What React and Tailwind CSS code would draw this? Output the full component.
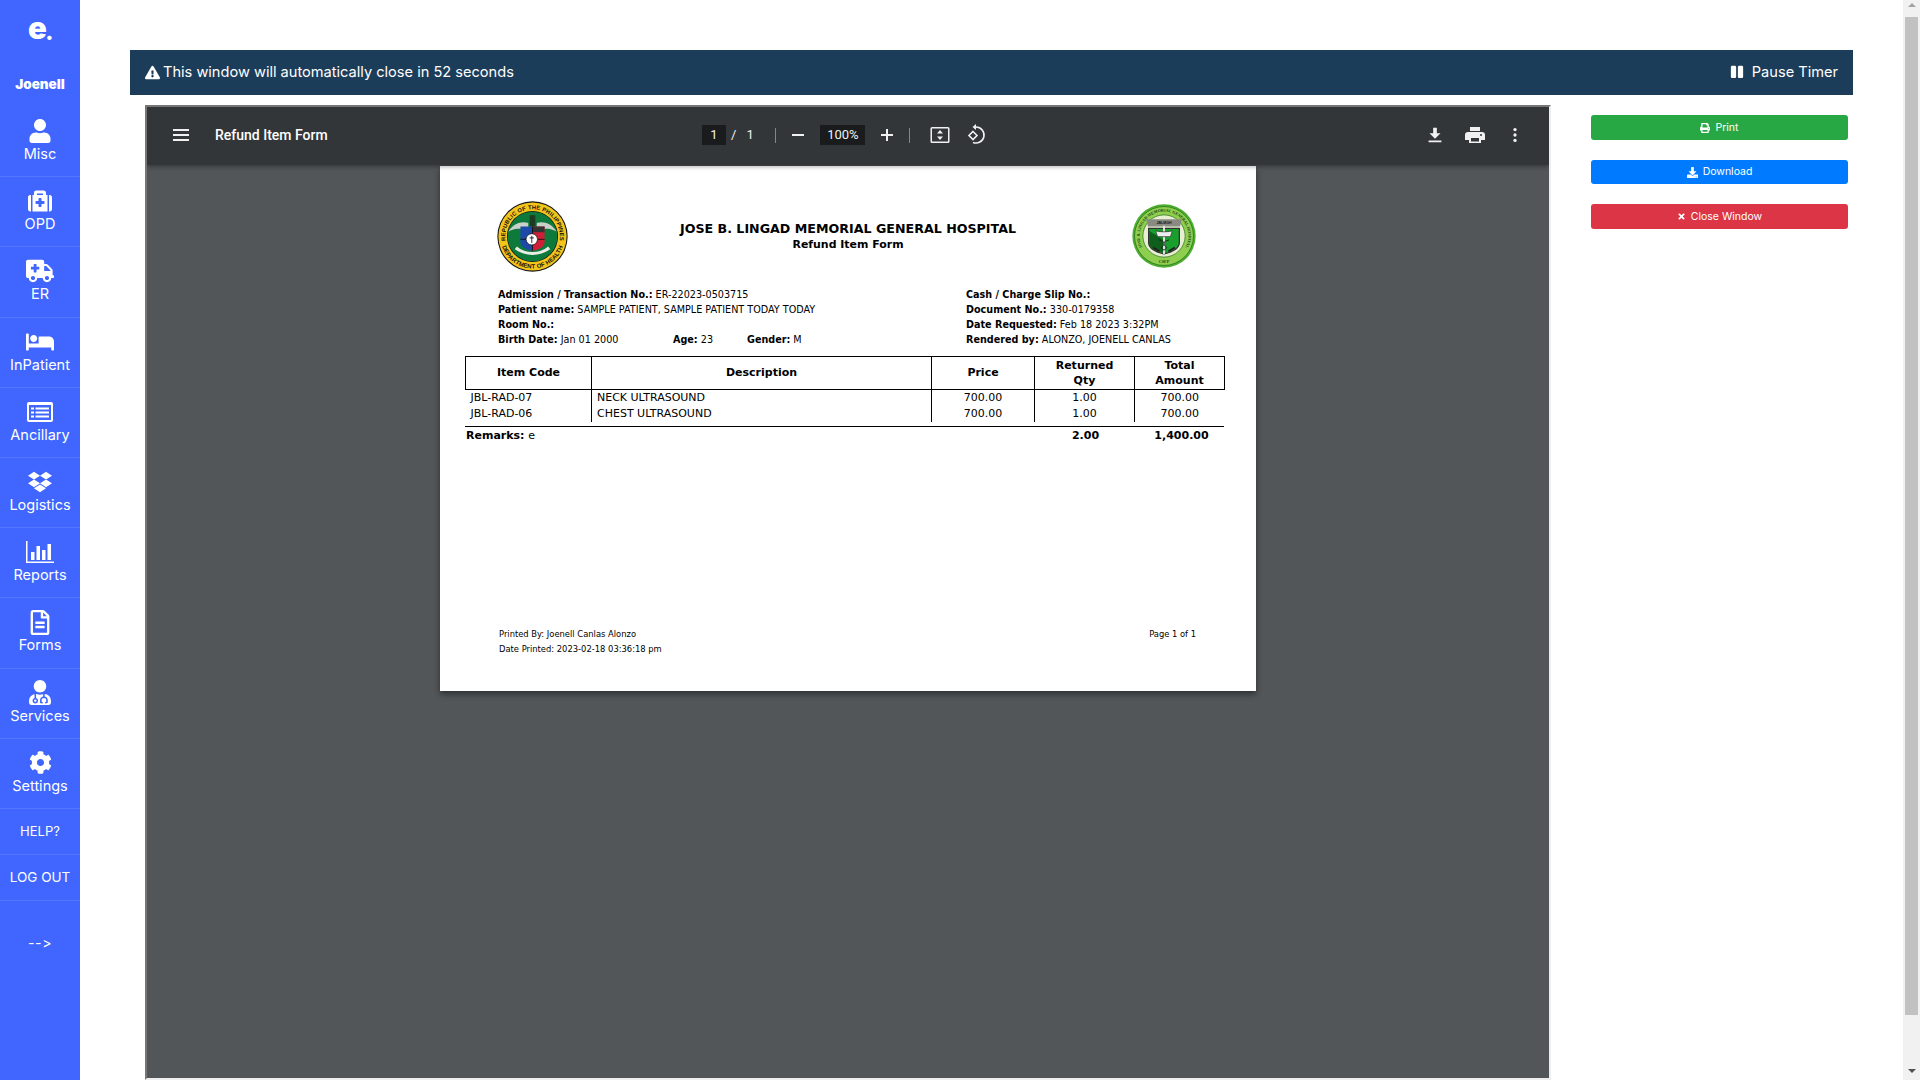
import {
  FaUser, FaMedkit, FaAmbulance, FaBed, FaDropbox, FaRegFileAlt, FaUserMd, FaCog,
  FaExclamationTriangle, FaPause, FaPrint, FaDownload, FaTimes,
} from 'react-icons/fa';

function ChartIcon({ className }) {
  return (
    <svg viewBox="0 0 28 22" className={className} fill="currentColor">
      <path d="M0 0h1.500v20.500H28V22H0z" />
      <path d="M5 11h3.500v8H5zM10.500 5h3.500v14h-3.500zM16 9h3.500v10H16zM21.500 3H25v16h-3.500z" />
    </svg>
  );
}

function ListIcon({ className }) {
  return (
    <svg viewBox="0 0 26 20" className={className}>
      <rect width="26" height="20" rx="2" fill="currentColor" />
      <rect x="2" y="3" width="22" height="15" fill="#4066ff" />
      <path d="M4 5.500h3v2H4zM4 9.500h3v2H4zM4 13.500h3v2H4zM8.500 5.500H22v2H8.500zM8.500 9.500H22v2H8.500zM8.500 13.500H22v2H8.500z" fill="currentColor" />
    </svg>
  );
}

const navItems = [
  { label: 'Misc', icon: <FaUser className="w-[22px] h-[24px]" /> },
  { label: 'OPD', icon: <FaMedkit className="w-[26px] h-[24px]" /> },
  { label: 'ER', icon: <FaAmbulance className="w-[28px] h-[24px]" /> },
  { label: 'InPatient', icon: <FaBed className="w-[28px] h-[24px]" /> },
  { label: 'Ancillary', icon: <ListIcon className="w-[26px] h-[20px]" /> },
  { label: 'Logistics', icon: <FaDropbox className="w-[24px] h-[24px]" /> },
  { label: 'Reports', icon: <ChartIcon className="w-[28px] h-[22px]" /> },
  { label: 'Forms', icon: <FaRegFileAlt className="w-[22px] h-[25px]" /> },
  { label: 'Services', icon: <FaUserMd className="w-[22px] h-[25px]" /> },
  { label: 'Settings', icon: <FaCog className="w-[23px] h-[23px]" /> },
];

function Sidebar() {
  return (
    <aside className="w-20 shrink-0 h-full bg-[#4066ff] text-white flex flex-col font-['Inter',sans-serif]">
      <div className="h-[107px] shrink-0 flex flex-col items-center">
        <div className="mt-[7px] h-[40px] flex items-center text-[31px] font-black leading-none tracking-tighter">e<span className="text-[22px] mt-[9px]">.</span></div>
        <div className="mt-[31px] text-[13.500px] font-black leading-none">Joenell</div>
      </div>
      {navItems.map((item) => (
        <div key={item.label} className="h-[70.2px] shrink-0 border-b border-white/10 flex flex-col items-center pt-[11px]">
          <div className="h-[26px] flex items-center justify-center">{item.icon}</div>
          <div className="mt-[1px] text-[14.500px] leading-[18px]">{item.label}</div>
        </div>
      ))}
      <div className="h-[46px] shrink-0 border-b border-white/10 flex items-center justify-center text-[13px]">HELP?</div>
      <div className="h-[46px] shrink-0 border-b border-white/10 flex items-center justify-center text-[13.500px]">LOG OUT</div>
      <div className="mt-[32px] text-center text-[14px] leading-[20px] tracking-wider">--&gt;</div>
    </aside>
  );
}

function ToolIcon({ children, className, size = 24 }) {
  return (
    <svg viewBox="0 0 24 24" width={size} height={size} fill="currentColor" className={className}>
      {children}
    </svg>
  );
}

function Separator() {
  return <div className="w-px h-[15px] bg-white/40" />;
}

function PdfToolbar() {
  return (
    <div className="h-[58px] pb-[2px] shrink-0 bg-[#323639] text-[#f1f1f1] flex items-center shadow-[0_2px_4px_rgba(0,0,0,0.3)] relative z-10 font-['Roboto',sans-serif]">
      <ToolIcon size={24} className="ml-[22px]"><path d="M4 6h16v2H4zM4 11h16v2H4zM4 16h16v2H4z" /></ToolIcon>
      <div className="ml-[22px] w-[487px] text-[14px] font-medium text-white">Refund Item Form</div>
      <div className="w-[24px] h-[20px] bg-[#191b1c] flex items-center justify-center text-[13px]">1</div>
      <div className="ml-[5px] text-[13px]">/</div>
      <div className="ml-[10px] w-[8px] text-[13px]">1</div>
      <div className="ml-[21px]"><Separator /></div>
      <ToolIcon size={24} className="ml-[10px]"><path d="M6 11h12v2H6z" /></ToolIcon>
      <div className="ml-[10px] w-[45px] h-[20px] bg-[#191b1c] flex items-center justify-center text-[13px]">100%</div>
      <ToolIcon size={24} className="ml-[10px]"><path d="M11 6h2v5h5v2h-5v5h-2v-5H6v-2h5z" /></ToolIcon>
      <div className="ml-[10px]"><Separator /></div>
      <ToolIcon size={24} className="ml-[18px]">
        <path d="M4 4h16a1.500 1.500 0 0 1 1.500 1.500v13A1.500 1.500 0 0 1 20 20H4a1.500 1.500 0 0 1-1.500-1.500v-13A1.500 1.500 0 0 1 4 4zm0 1.500v13h16v-13z" />
        <path d="M12 7l3 3.500H9zM12 17l-3-3.500h6z" />
      </ToolIcon>
      <ToolIcon size={24} className="ml-[12px]">
        <path d="M9 8.500 13 12.500 9 16.500 5 12.500z" fill="none" stroke="currentColor" strokeWidth="1.600" />
        <path d="M11 4h1a8 8 0 1 1-3 15.400" fill="none" stroke="currentColor" strokeWidth="1.600" />
        <path d="M12 1v6l-3.500-3z" />
      </ToolIcon>
      <div className="ml-auto flex items-center mr-[24px]">
        <ToolIcon size={22}><path d="M10 4h4v6h4l-6 6-6-6h4zM5 18h14v2H5z" /></ToolIcon>
        <ToolIcon size={24} className="ml-[17px]"><path d="M7 4h10v4H7zM5 9h14a3 3 0 0 1 3 3v5h-4v3H6v-3H2v-5a3 3 0 0 1 3-3zm3 6v3.500h8V15zm10-4a1 1 0 1 0 0 2 1 1 0 0 0 0-2z" fillRule="evenodd" /></ToolIcon>
        <ToolIcon size={20} className="ml-[18px]"><circle cx="12" cy="5.500" r="2" /><circle cx="12" cy="12" r="2" /><circle cx="12" cy="18.500" r="2" /></ToolIcon>
      </div>
    </div>
  );
}

function DohSeal() {
  return (
    <svg viewBox="0 0 100 100" className="w-[71px] h-[71px]">
      <defs>
        <path id="dohTop" d="M13.800 63.200A38.500 38.500 0 1 1 86.200 63.200" />
        <path id="dohBottom" d="M7.700 34.600A45 45 0 1 0 92.300 34.600" />
      </defs>
      <circle cx="50" cy="50" r="49.500" fill="#161616" />
      <circle cx="50" cy="50" r="48" fill="#f3c51b" />
      <circle cx="50" cy="50" r="36" fill="#161616" />
      <circle cx="50" cy="50" r="35" fill="#0d7a3c" />
      <text fontSize="8" fontWeight="700" fill="#111" fontFamily="'Liberation Sans',sans-serif" letterSpacing="0.300">
        <textPath href="#dohTop" startOffset="50%" textAnchor="middle">REPUBLIC OF THE PHILIPPINES</textPath>
      </text>
      <text fontSize="8.500" fontWeight="700" fill="#111" fontFamily="'Liberation Sans',sans-serif" letterSpacing="0.200">
        <textPath href="#dohBottom" startOffset="50%" textAnchor="middle">DEPARTMENT OF HEALTH</textPath>
      </text>
      <path d="M16 43c7-11 18-15 28-12v8H29c-5 0-9 2-13 4z" fill="#c9cfc9" />
      <path d="M84 43c-7-11-18-15-28-12v8h15c5 0 9 2 13 4z" fill="#c9cfc9" />
      <path d="M46 20h8v16h-8z" fill="#1d3a22" />
      <path d="M33 36h17v34c-8-1-17-5-17-12z" fill="#1d4aa8" />
      <path d="M50 36h17v22c0 7-9 11-17 12z" fill="#cf1f36" />
      <path d="M50 36h17v8H50z" fill="#333" />
      <path d="M33 54h34M50 36v34" stroke="#111" strokeWidth="1.200" />
      <circle cx="49" cy="54" r="8" fill="#fff" stroke="#111" />
      <path d="M49 49v10M46 52h6" stroke="#111" strokeWidth="1.200" />
      <path d="M25 68c8 5 16 8 25 8s17-3 25-8l-3-4c-6 5-14 8-22 8s-16-3-22-8z" fill="#e9ece4" />
    </svg>
  );
}

function HospitalSeal() {
  return (
    <svg viewBox="0 0 100 100" className="w-[64px] h-[64px]">
      <defs>
        <path id="hospTop" d="M20.900 74.400A38 38 0 1 1 79.100 74.400" />
      </defs>
      <circle cx="50" cy="50" r="49.500" fill="#4caf2f" />
      <circle cx="50" cy="50" r="46" fill="#8fcf4f" stroke="#1e5e16" />
      <circle cx="50" cy="50" r="33" fill="#e6f0d0" stroke="#1e5e16" />
      <text fontSize="6.400" fontWeight="700" fill="#183f10" fontFamily="'Liberation Serif',serif">
        <textPath href="#hospTop" startOffset="50%" textAnchor="middle">JOSE B. LINGAD MEMORIAL GENERAL HOSPITAL</textPath>
      </text>
      <path d="M22 24h56l-3 11H25z" fill="#8a8a84" />
      <text x="50" y="32" fontSize="5.500" fontWeight="700" textAnchor="middle" fill="#111" fontFamily="'Liberation Sans',sans-serif">JBLMGH</text>
      <path d="M26 38h48v22c0 10-12 15-24 18-12-3-24-8-24-18z" fill="#18a02c" stroke="#333" strokeWidth="2" />
      <path d="M27 42l22 14v20c-10-3-22-7-22-15z" fill="#0e5e1c" />
      <path d="M50 34v44" stroke="#e6e6e6" strokeWidth="3" />
      <path d="M37 42c8 2 18 2 26 0l-3 9H40z" fill="#eee" stroke="#222" />
      <path d="M42 56c10 3 10 6 8 8s-8 4 0 8M58 56c-10 3-10 6-8 8s8 4 0 8" fill="none" stroke="#222" strokeWidth="1.500" />
      <path d="M33 68l10 6M67 68l-10 6" stroke="#222" strokeWidth="3" />
      <text x="50" y="92" fontSize="6.500" fontWeight="700" textAnchor="middle" fill="#183f10" fontFamily="'Liberation Serif',serif">CSFP</text>
    </svg>
  );
}

function Info({ label, value }) {
  return <div className="h-[15px] whitespace-nowrap"><b>{label}</b> {value}</div>;
}

function PdfPage() {
  return (
    <div className="mt-[1px] ml-[293px] w-[816px] h-[525px] shrink-0 bg-white text-black shadow-[0_3px_6px_rgba(0,0,0,0.45)] text-[9.650px] leading-[15px] font-['DejaVu_Sans',sans-serif] relative">
      <div className="pt-[35px] grid grid-cols-[128px_1fr_128px]">
        <div className="pl-[57px]"><DohSeal /></div>
        <div className="text-center font-bold pt-[19px]">
          <div className="text-[12.650px] leading-[17px]">JOSE B. LINGAD MEMORIAL GENERAL HOSPITAL</div>
          <div className="text-[10.950px] leading-[15px]">Refund Item Form</div>
        </div>
        <div className="flex justify-end pr-[60px] pt-[3px]"><HospitalSeal /></div>
      </div>

      <div className="mt-[15px] pl-[58px] flex">
        <div className="w-[468px]">
          <Info label="Admission / Transaction No.:" value="ER-22023-0503715" />
          <Info label="Patient name:" value="SAMPLE PATIENT, SAMPLE PATIENT TODAY TODAY" />
          <Info label="Room No.:" value="" />
          <div className="h-[15px] flex">
            <div className="w-[175px]"><b>Birth Date:</b> Jan 01 2000</div>
            <div className="w-[74px]"><b>Age:</b> 23</div>
            <div><b>Gender:</b> M</div>
          </div>
        </div>
        <div>
          <Info label="Cash / Charge Slip No.:" value="" />
          <Info label="Document No.:" value="330-0179358" />
          <Info label="Date Requested:" value="Feb 18 2023 3:32PM" />
          <Info label="Rendered by:" value="ALONZO, JOENELL CANLAS" />
        </div>
      </div>

      <table className="mt-[9px] ml-[25px] w-[759px] table-fixed border-collapse text-[11px] leading-[15.500px]">
        <colgroup>
          <col className="w-[126px]" />
          <col className="w-[340px]" />
          <col className="w-[103px]" />
          <col className="w-[100px]" />
          <col className="w-[90px]" />
        </colgroup>
        <thead>
          <tr className="h-[33px] font-bold">
            <th className="border border-black font-bold">Item Code</th>
            <th className="border border-black font-bold">Description</th>
            <th className="border border-black font-bold">Price</th>
            <th className="border border-black font-bold">Returned<br />Qty</th>
            <th className="border border-black font-bold">Total<br />Amount</th>
          </tr>
        </thead>
        <tbody>
          {[['JBL-RAD-07', 'NECK ULTRASOUND'], ['JBL-RAD-06', 'CHEST ULTRASOUND']].map(([code, desc]) => (
            <tr key={code} className="h-[16px] align-bottom">
              <td className="border-r border-black pl-[5px]">{code}</td>
              <td className="border-r border-black pl-[5px]">{desc}</td>
              <td className="border-r border-black text-center">700.00</td>
              <td className="border-r border-black text-center">1.00</td>
              <td className="text-center">700.00</td>
            </tr>
          ))}
        </tbody>
      </table>

      <div className="mt-[4px] ml-[25px] w-[759px] border-t border-black pt-[1px] flex text-[11px] leading-[15px] font-bold">
        <div className="w-[569px] pl-[1px]">Remarks: <span className="font-normal">e</span></div>
        <div className="w-[100px] text-center pl-[3px]">2.00</div>
        <div className="w-[90px] text-center pl-[5px]">1,400.00</div>
      </div>

      <div className="mt-[183px] pl-[59px] pr-[60px] flex justify-between text-[9.300px] leading-[15px] font-['DejaVu_Sans_Condensed','DejaVu_Sans',sans-serif] [font-stretch:condensed]">
        <div>
          <div>Printed By: Joenell Canlas Alonzo</div>
          <div>Date Printed: 2023-02-18 03:36:18 pm</div>
        </div>
        <div>Page 1 of 1</div>
      </div>
    </div>
  );
}

function PdfViewer() {
  return (
    <div className="w-[1406px] h-[975px] shrink-0 border-2 border-t-[#767676] border-l-[#767676] border-r-[#eeeeee] border-b-[#eeeeee] bg-[#525659] flex flex-col overflow-hidden">
      <PdfToolbar />
      <PdfPage />
    </div>
  );
}

function ActionButton({ className, icon, label }) {
  return (
    <button className={`w-[257px] rounded-[3px] text-white text-[10.500px] flex items-center justify-center gap-[5px] ${className}`}>
      {icon}
      {label}
    </button>
  );
}

function Scrollbar() {
  return (
    <div className="w-[17px] shrink-0 h-full bg-[#f1f1f1] flex flex-col items-center relative">
      <div className="mt-[3px] w-0 h-0 border-x-[4px] border-x-transparent border-b-[4px] border-b-[#a3a3a3]" />
      <div className="mt-[10px] w-[13px] h-[998px] bg-[#c1c1c1]" />
      <div className="mt-[54px] w-0 h-0 border-x-[4px] border-x-transparent border-t-[4px] border-t-[#505050]" />
    </div>
  );
}

export default function App() {
  return (
    <div className="h-screen w-full flex overflow-hidden bg-white">
      <Sidebar />
      <main className="flex-1 min-w-0 pt-[50px] pl-[50px] pr-[50px] font-['Inter',sans-serif]">
        <div className="h-[45px] bg-[#1c3d5a] text-white flex items-center justify-between pl-[15px] pr-[15px] text-[14.600px]">
          <div className="flex items-center gap-[3px]"><FaExclamationTriangle className="w-[15px] h-[15px]" />This window will automatically close in 52 seconds</div>
          <div className="flex items-center gap-[8px]"><FaPause className="w-[14px] h-[14px]" />Pause Timer</div>
        </div>
        <div className="mt-[10px] ml-[15px] flex">
          <PdfViewer />
          <div className="ml-[40px] pt-[10px] flex flex-col gap-[20px]">
            <ActionButton className="h-[25px] bg-[#28a745]" icon={<FaPrint className="w-[10px] h-[10px]" />} label="Print" />
            <ActionButton className="h-[24px] bg-[#007bff]" icon={<FaDownload className="w-[11px] h-[11px]" />} label="Download" />
            <ActionButton className="h-[25px] bg-[#dc3545]" icon={<FaTimes className="w-[9px] h-[9px]" />} label="Close Window" />
          </div>
        </div>
      </main>
      <Scrollbar />
    </div>
  );
}
